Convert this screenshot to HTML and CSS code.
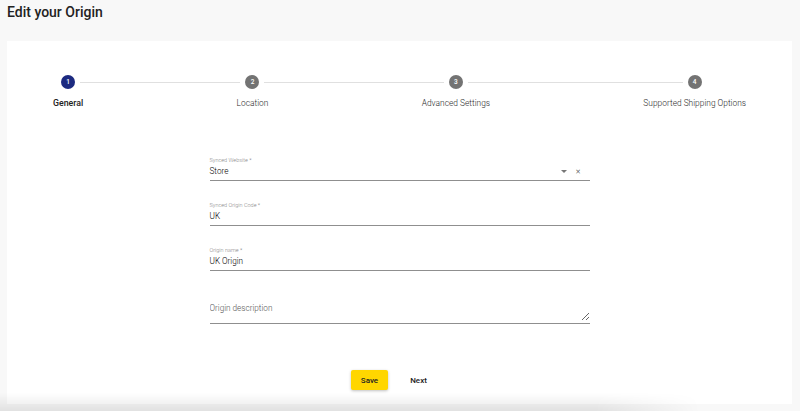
FILE: index.html
```html
<!DOCTYPE html>
<html lang="en">
<head>
    <meta charset="UTF-8">
    <meta name="viewport" content="width=device-width, initial-scale=1.0">
    <title>Edit your Origin</title>
    <link rel="stylesheet" href="styles.css">
</head>
<body>
    <h1 class="page-title">Edit your Origin</h1>
    <div class="card">
        <div class="stepper">
            <div class="step active">
                <div class="step-top">
                    <span class="step-line left"></span>
                    <span class="step-circle">1</span>
                    <span class="step-line right"></span>
                </div>
                <div class="step-label">General</div>
            </div>
            <div class="connector"><span></span></div>
            <div class="step">
                <div class="step-top">
                    <span class="step-line left"></span>
                    <span class="step-circle">2</span>
                    <span class="step-line right"></span>
                </div>
                <div class="step-label">Location</div>
            </div>
            <div class="connector"><span></span></div>
            <div class="step">
                <div class="step-top">
                    <span class="step-line left"></span>
                    <span class="step-circle">3</span>
                    <span class="step-line right"></span>
                </div>
                <div class="step-label">Advanced Settings</div>
            </div>
            <div class="connector"><span></span></div>
            <div class="step">
                <div class="step-top">
                    <span class="step-line left"></span>
                    <span class="step-circle">4</span>
                    <span class="step-line right"></span>
                </div>
                <div class="step-label">Supported Shipping Options</div>
            </div>
        </div>

        <form class="origin-form">
            <div class="field">
                <label class="field-label">Synced Website *</label>
                <div class="field-row">
                    <span class="field-value">Store</span>
                    <span class="select-arrow"></span>
                    <span class="select-clear">&#215;</span>
                </div>
            </div>
            <div class="field">
                <label class="field-label">Synced Origin Code *</label>
                <div class="field-row">
                    <span class="field-value">UK</span>
                </div>
            </div>
            <div class="field">
                <label class="field-label">Origin name *</label>
                <div class="field-row">
                    <span class="field-value">UK Origin</span>
                </div>
            </div>
            <div class="field textarea-field">
                <label class="field-label"></label>
                <textarea class="field-textarea" placeholder="Origin description"></textarea>
            </div>

            <div class="actions">
                <button type="button" class="btn btn-save">Save</button>
                <button type="button" class="btn btn-next">Next</button>
            </div>
        </form>
    </div>
    <div class="bottom-shade"></div>
</body>
</html>
```

FILE: styles.css
```css
html, body {
    height: 100%;
}
body {
    font-family: Roboto, "Liberation Sans", Arial, sans-serif;
    color: #222;
    background-color: #f8f8f8;
    margin: 0;
    padding: 0 8px 0 7px;
    overflow: hidden;
}
.page-title {
    margin: 0;
    font-size: 14px;
    line-height: 24px;
    font-weight: 500;
    color: #222;
}
.card {
    margin-top: 17px;
    background-color: #ffffff;
    padding: 34px 22px 14px;
    height: 363px;
    box-sizing: border-box;
}
.stepper {
    display: flex;
    align-items: flex-start;
}
.step {
    display: flex;
    flex-direction: column;
    align-items: center;
    padding: 0 24px;
}
.step-top {
    display: flex;
    align-items: center;
    align-self: stretch;
    height: 14px;
    margin: 0 -24px;
}
.step-line {
    flex: 1;
    height: 1px;
    background-color: #e0e0e0;
}
.step-line.left {
    margin-right: 5px;
}
.step-line.right {
    margin-left: 5px;
}
.step:first-child .step-line.left,
.step:last-child .step-line.right {
    visibility: hidden;
}
.step-circle {
    width: 14px;
    height: 14px;
    border-radius: 50%;
    background-color: #737373;
    color: #fff;
    font-size: 6.5px;
    font-weight: 500;
    display: flex;
    align-items: center;
    justify-content: center;
    flex: none;
}
.step.active .step-circle {
    background-color: #1c2a80;
}
.step-label {
    margin-top: 9px;
    font-size: 8.4px;
    line-height: 10px;
    color: #2a2a2a;
    font-weight: 300;
    white-space: nowrap;
}
.step.active .step-label {
    font-size: 8.8px;
    font-weight: 500;
    color: #222;
}
.connector {
    flex: 1;
    height: 14px;
    display: flex;
    align-items: center;
}
.connector span {
    flex: 1;
    height: 1px;
    background-color: #e0e0e0;
}
.origin-form {
    width: 380px;
    margin: 48px auto 0;
}
.field {
    border-bottom: 1px solid #8f8f8f;
    padding-bottom: 3px;
    margin-bottom: 20px;
}
.field-label {
    display: block;
    height: 9px;
    font-size: 5.5px;
    line-height: 9px;
    color: #888;
    font-weight: 300;
}
.field-row {
    display: flex;
    align-items: center;
    height: 12px;
}
.field-value {
    flex: 1;
    font-size: 8.2px;
    line-height: 12px;
    color: #000;
    font-weight: 300;
}
.select-arrow {
    width: 0;
    height: 0;
    border-left: 3px solid transparent;
    border-right: 3px solid transparent;
    border-top: 3px solid #777;
    margin-right: 9px;
    margin-top: 1px;
}
.select-clear {
    font-size: 9px;
    line-height: 12px;
    color: #444;
    font-weight: 300;
    margin-right: 9px;
}
.textarea-field {
    padding-bottom: 2px;
}
.field-textarea {
    display: block;
    width: 100%;
    height: 21px;
    box-sizing: border-box;
    border: none;
    outline: none;
    padding: 2px 0 0;
    margin: 0;
    font-family: Roboto, "Liberation Sans", Arial, sans-serif;
    font-size: 8.2px;
    font-weight: 300;
    line-height: 12px;
    color: #222;
    resize: vertical;
    background: transparent;
}
.field-textarea::placeholder {
    color: #555;
}
.actions {
    display: flex;
    justify-content: center;
    gap: 12px;
    margin-top: 46px;
    padding-right: 11px;
}
.btn {
    min-width: 37px;
    height: 20px;
    padding: 0 6px;
    border: none;
    border-radius: 2px;
    font-family: Roboto, "Liberation Sans", Arial, sans-serif;
    font-size: 8px;
    font-weight: 500;
    color: #222;
    background: transparent;
    cursor: pointer;
}
.btn-save {
    background-color: #ffd600;
    box-shadow: 0 1px 3px rgba(0, 0, 0, 0.25);
}
.bottom-shade {
    position: absolute;
    left: 0;
    bottom: 0;
    width: 700px;
    height: 18px;
    background: linear-gradient(to bottom, rgba(0, 0, 0, 0), rgba(0, 0, 0, 0.09));
    -webkit-mask-image: linear-gradient(to right, #000 85%, transparent);
    mask-image: linear-gradient(to right, #000 85%, transparent);
    pointer-events: none;
}
```
